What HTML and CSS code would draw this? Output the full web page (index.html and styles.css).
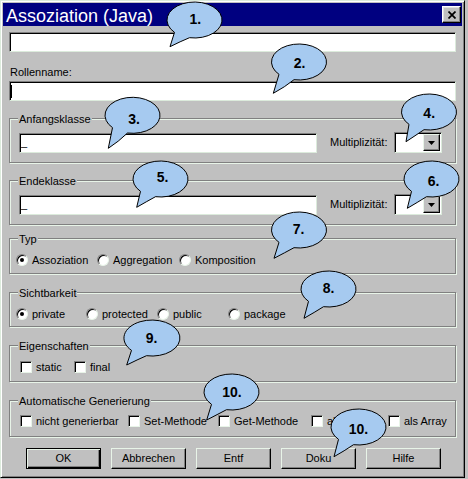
FILE: index.html
```html
<!DOCTYPE html>
<html lang="de">
<head>
<meta charset="utf-8">
<title>Assoziation (Java)</title>
<link rel="stylesheet" href="styles.css">
</head>
<body>
<div class="screen">
  <div class="window">
    <div class="titlebar">
      <span class="title">Assoziation (Java)</span>
      <span class="close"><svg width="8" height="8" viewBox="0 0 8 8"><path d="M0.5,0.5 L7.5,7.5 M7.5,0.5 L0.5,7.5" stroke="#000" stroke-width="1.7" fill="none"/></svg></span>
    </div>
    <div class="content">
      <div class="field"></div>
      <div class="label">Rollenname:</div>
      <div class="field field-role"><span class="caret"></span></div>

      <div class="group g-class">
        <div class="legend">Anfangsklasse</div>
        <div class="class-row">
          <div class="field field-class">_</div>
          <span class="mult">Multiplizität:</span>
          <div class="combo"><span class="combo-btn"><svg width="7" height="4" viewBox="0 0 7 4"><polygon points="0,0 7,0 3.5,4" fill="#000"/></svg></span></div>
        </div>
      </div>

      <div class="group g-end">
        <div class="legend">Endeklasse</div>
        <div class="class-row">
          <div class="field field-class">_</div>
          <span class="mult">Multiplizität:</span>
          <div class="combo"><span class="combo-btn"><svg width="7" height="4" viewBox="0 0 7 4"><polygon points="0,0 7,0 3.5,4" fill="#000"/></svg></span></div>
        </div>
      </div>

      <div class="group g-typ">
        <div class="legend">Typ</div>
        <div class="opt-row radios cols-typ">
          <span class="opt"><span class="radio on"></span>Assoziation</span>
          <span class="opt"><span class="radio"></span>Aggregation</span>
          <span class="opt"><span class="radio"></span>Komposition</span>
        </div>
      </div>

      <div class="group g-sicht">
        <div class="legend">Sichtbarkeit</div>
        <div class="opt-row radios cols-sicht">
          <span class="opt"><span class="radio on"></span>private</span>
          <span class="opt"><span class="radio"></span>protected</span>
          <span class="opt"><span class="radio"></span>public</span>
          <span class="opt"><span class="radio"></span>package</span>
        </div>
      </div>

      <div class="group g-eigen">
        <div class="legend">Eigenschaften</div>
        <div class="opt-row checks cols-eigen">
          <span class="opt"><span class="check"></span>static</span>
          <span class="opt"><span class="check"></span>final</span>
        </div>
      </div>

      <div class="group g-auto">
        <div class="legend">Automatische Generierung</div>
        <div class="opt-row checks cols-auto">
          <span class="opt"><span class="check"></span>nicht generierbar</span>
          <span class="opt"><span class="check"></span>Set-Methode</span>
          <span class="opt"><span class="check"></span>Get-Methode</span>
          <span class="opt"><span class="check"></span>als Liste</span>
          <span class="opt"><span class="check"></span>als Array</span>
        </div>
      </div>

      <div class="buttons">
        <button class="btn btn-default">OK</button>
        <button class="btn">Abbrechen</button>
        <button class="btn">Entf</button>
        <button class="btn">Doku</button>
        <button class="btn">Hilfe</button>
      </div>
    </div>
  </div>

  <svg class="callouts" width="468" height="479" viewBox="0 0 468 479">
    <g class="bubble" transform="translate(194.5 20)"><path d="M-20,12.35 L-24.5,26.7 Q-14,21.4 -5,17.7 A27.5 18 0 1 0 -20,12.35 Z"/></g>
    <g class="bubble" transform="translate(299 62)"><path d="M-20,12.35 L-25.7,31.3 Q-14,25 -5,17.7 A27.5 18 0 1 0 -20,12.35 Z"/></g>
    <g class="bubble" transform="translate(132.5 115.3)"><path d="M-20,12.35 L-24.2,33 Q-14,26.4 -5,17.7 A27.5 18 0 1 0 -20,12.35 Z"/></g>
    <g class="bubble" transform="translate(429 112)"><path d="M-20,12.35 L-23,29.7 Q-14,23.8 -5,17.7 A27.5 18 0 1 0 -20,12.35 Z"/></g>
    <g class="bubble" transform="translate(160.5 179)"><path d="M-20,12.35 L-23.8,28.3 Q-14,22.6 -5,17.7 A27.5 18 0 1 0 -20,12.35 Z"/></g>
    <g class="bubble" transform="translate(431.5 179)"><path d="M-20,12.35 L-24.2,29.3 Q-14,23.4 -5,17.7 A27.5 18 0 1 0 -20,12.35 Z"/></g>
    <g class="bubble" transform="translate(299 230)"><path d="M-20,12.35 L-25,28.3 Q-14,22.6 -5,17.7 A27.5 18 0 1 0 -20,12.35 Z"/></g>
    <g class="bubble" transform="translate(328.5 289)"><path d="M-20,12.35 L-24.5,29.3 Q-14,23.4 -5,17.7 A27.5 18 0 1 0 -20,12.35 Z"/></g>
    <g class="bubble" transform="translate(151.5 338)"><path d="M-20,12.35 L-24.8,27 Q-14,21.6 -5,17.7 A28 18 0 1 0 -20,12.35 Z"/></g>
    <g class="bubble" transform="translate(231.5 392)"><path d="M-20,12.35 L-24.8,28 Q-14,22.4 -5,17.7 A27.5 18 0 1 0 -20,12.35 Z"/></g>
    <g class="bubble" transform="translate(358.5 427)"><path d="M-20,12.35 L-24.5,29.7 Q-14,23.8 -5,17.7 A27.5 18 0 1 0 -20,12.35 Z"/></g>

    <text class="num" x="195.3" y="23.5">1.</text>
    <text class="num" x="299.5" y="68.3">2.</text>
    <text class="num" x="134" y="124.3">3.</text>
    <text class="num" x="429.2" y="118.3">4.</text>
    <text class="num" x="162.5" y="181.7">5.</text>
    <text class="num" x="433.5" y="186">6.</text>
    <text class="num" x="298.5" y="234.3">7.</text>
    <text class="num" x="328.5" y="293.3">8.</text>
    <text class="num" x="151.5" y="343.3">9.</text>
    <text class="num" x="232" y="396.7">10.</text>
    <text class="num" x="358.5" y="434.3">10.</text>
  </svg>
</div>
</body>
</html>
```

FILE: styles.css
```css
* {
  box-sizing: border-box;
}

html,
body {
  margin: 0;
  padding: 0;
}

body {
  background: #c0c0c0;
  color: #000;
  font-family: "Liberation Sans", Arial, sans-serif;
  font-size: 11px;
  line-height: 13px;
}

.screen {
  position: relative;
  width: 468px;
  height: 479px;
  overflow: hidden;
}

.window {
  width: 465px;
  height: 478px;
  background: #c0c0c0;
  border: 1px solid;
  border-color: #dcebdc #000 #000 #dcebdc;
  box-shadow: inset 1px 1px 0 #fff, inset -1px -1px 0 #808080;
  padding: 2px;
}

/* title bar */
.titlebar {
  display: flex;
  align-items: flex-start;
  height: 23px;
  background: #000080;
}

.title {
  flex: 1;
  color: #fff;
  font-size: 18px;
  line-height: 19px;
  padding: 4px 0 0 3px;
  white-space: nowrap;
}

.close {
  display: flex;
  align-items: center;
  justify-content: center;
  width: 19px;
  height: 17px;
  margin: 3px 1px 0 0;
  background: #c0c0c0;
  border: 1px solid;
  border-color: #fff #000 #000 #fff;
  box-shadow: inset -1px -1px 0 #808080, inset 1px 1px 0 #dfdfdf;
}

.close svg {
  display: block;
}

/* content */
.content {
  padding: 6px 6px 0;
}

.field {
  display: flex;
  align-items: center;
  height: 20px;
  padding: 0 1px;
  background: #fff;
  border: 1px solid;
  border-color: #808080 #dcebdc #dcebdc #808080;
  box-shadow: inset 1px 1px 0 #000;
  white-space: nowrap;
}

.label {
  margin-top: 14px;
  padding-left: 1px;
}

.field-role {
  margin-top: 2px;
}

.caret {
  width: 1px;
  height: 13px;
  margin-left: 0;
  background: #000;
}

/* group boxes */
.group {
  border: 1px solid #808080;
  box-shadow: inset 1px 1px 0 #e8f4e8, 1px 1px 0 #e8f4e8;
}

.legend {
  width: max-content;
  margin: -6px 0 0 8px;
  padding: 0 1px;
  background: #c0c0c0;
  white-space: nowrap;
}

.g-class,
.g-end {
  margin-top: 17px;
  padding-bottom: 9px;
}

.g-typ {
  margin-top: 13px;
  padding-bottom: 5px;
}

.g-sicht {
  margin-top: 18px;
  padding-bottom: 4px;
}

.g-eigen {
  margin-top: 18px;
  padding-bottom: 6px;
}

.g-auto {
  margin-top: 18px;
  padding-bottom: 7px;
}

.class-row {
  display: flex;
  align-items: center;
  height: 21px;
  margin-top: 6px;
  padding: 0 13px 0 9px;
}

.field-class {
  width: 298px;
  flex: none;
}

.mult {
  margin-left: 13px;
  white-space: nowrap;
}

.combo {
  display: flex;
  justify-content: flex-end;
  align-items: center;
  width: 48px;
  height: 21px;
  margin-left: auto;
  background: #fff;
  border: 1px solid;
  border-color: #808080 #dcebdc #dcebdc #808080;
  box-shadow: inset 1px 1px 0 #000;
  padding: 1px 1px 1px 0;
}

.combo-btn {
  display: flex;
  align-items: center;
  justify-content: center;
  width: 17px;
  height: 17px;
  background: #c0c0c0;
  border: 1px solid;
  border-color: #e8f4e8 #000 #000 #e8f4e8;
  box-shadow: inset -1px -1px 0 #808080;
}

.combo-btn svg {
  display: block;
}

/* option rows */
.opt-row {
  display: grid;
  align-items: center;
  height: 16px;
  margin-top: 6px;
}

.g-auto .opt-row {
  margin-top: 5px;
}

.radios {
  padding-left: 6px;
}

.checks {
  padding-left: 10px;
}

.cols-typ {
  grid-template-columns: 81px 82px auto;
}

.cols-sicht {
  grid-template-columns: 70px 71px 71px auto;
}

.cols-eigen {
  grid-template-columns: 54px auto;
}

.cols-auto {
  grid-template-columns: 108px 90px 93px 77px auto;
}

.opt {
  display: flex;
  align-items: center;
  gap: 4px;
  white-space: nowrap;
}

.radio {
  position: relative;
  flex: none;
  width: 12px;
  height: 12px;
  border-radius: 50%;
  background: #fff;
  border: 1px solid;
  border-color: #808080 #e8f4e8 #e8f4e8 #808080;
  box-shadow: inset 1px 1px 0 #000;
}

.radio.on::after {
  content: "";
  position: absolute;
  left: 3px;
  top: 3px;
  width: 4px;
  height: 4px;
  border-radius: 50%;
  background: #000;
}

.check {
  flex: none;
  width: 12px;
  height: 12px;
  background: #fff;
  border: 1px solid;
  border-color: #808080 #e8f4e8 #e8f4e8 #808080;
  box-shadow: inset 1px 1px 0 #000;
}

/* buttons */
.buttons {
  display: flex;
  gap: 10px;
  margin-top: 11px;
  padding-left: 17px;
}

.btn {
  width: 75px;
  height: 21px;
  padding: 0;
  margin: 0;
  font: inherit;
  color: #000;
  background: #c0c0c0;
  border: 1px solid;
  border-color: #e8f4e8 #000 #000 #e8f4e8;
  box-shadow: inset -1px -1px 0 #808080;
  border-radius: 0;
}

.btn-default {
  border-color: #000;
  box-shadow: inset 1px 1px 0 #e8f4e8, inset -1px -1px 0 #000, inset -2px -2px 0 #808080;
}

/* annotation callouts */
.callouts {
  position: absolute;
  left: 0;
  top: 0;
  pointer-events: none;
}

.bubble path {
  fill: #a6caf0;
  stroke: #000;
  stroke-width: 1;
  stroke-linejoin: round;
}

.num {
  font-family: "Liberation Sans", Arial, sans-serif;
  font-weight: bold;
  font-size: 14px;
  text-anchor: middle;
  fill: #000;
}
```
